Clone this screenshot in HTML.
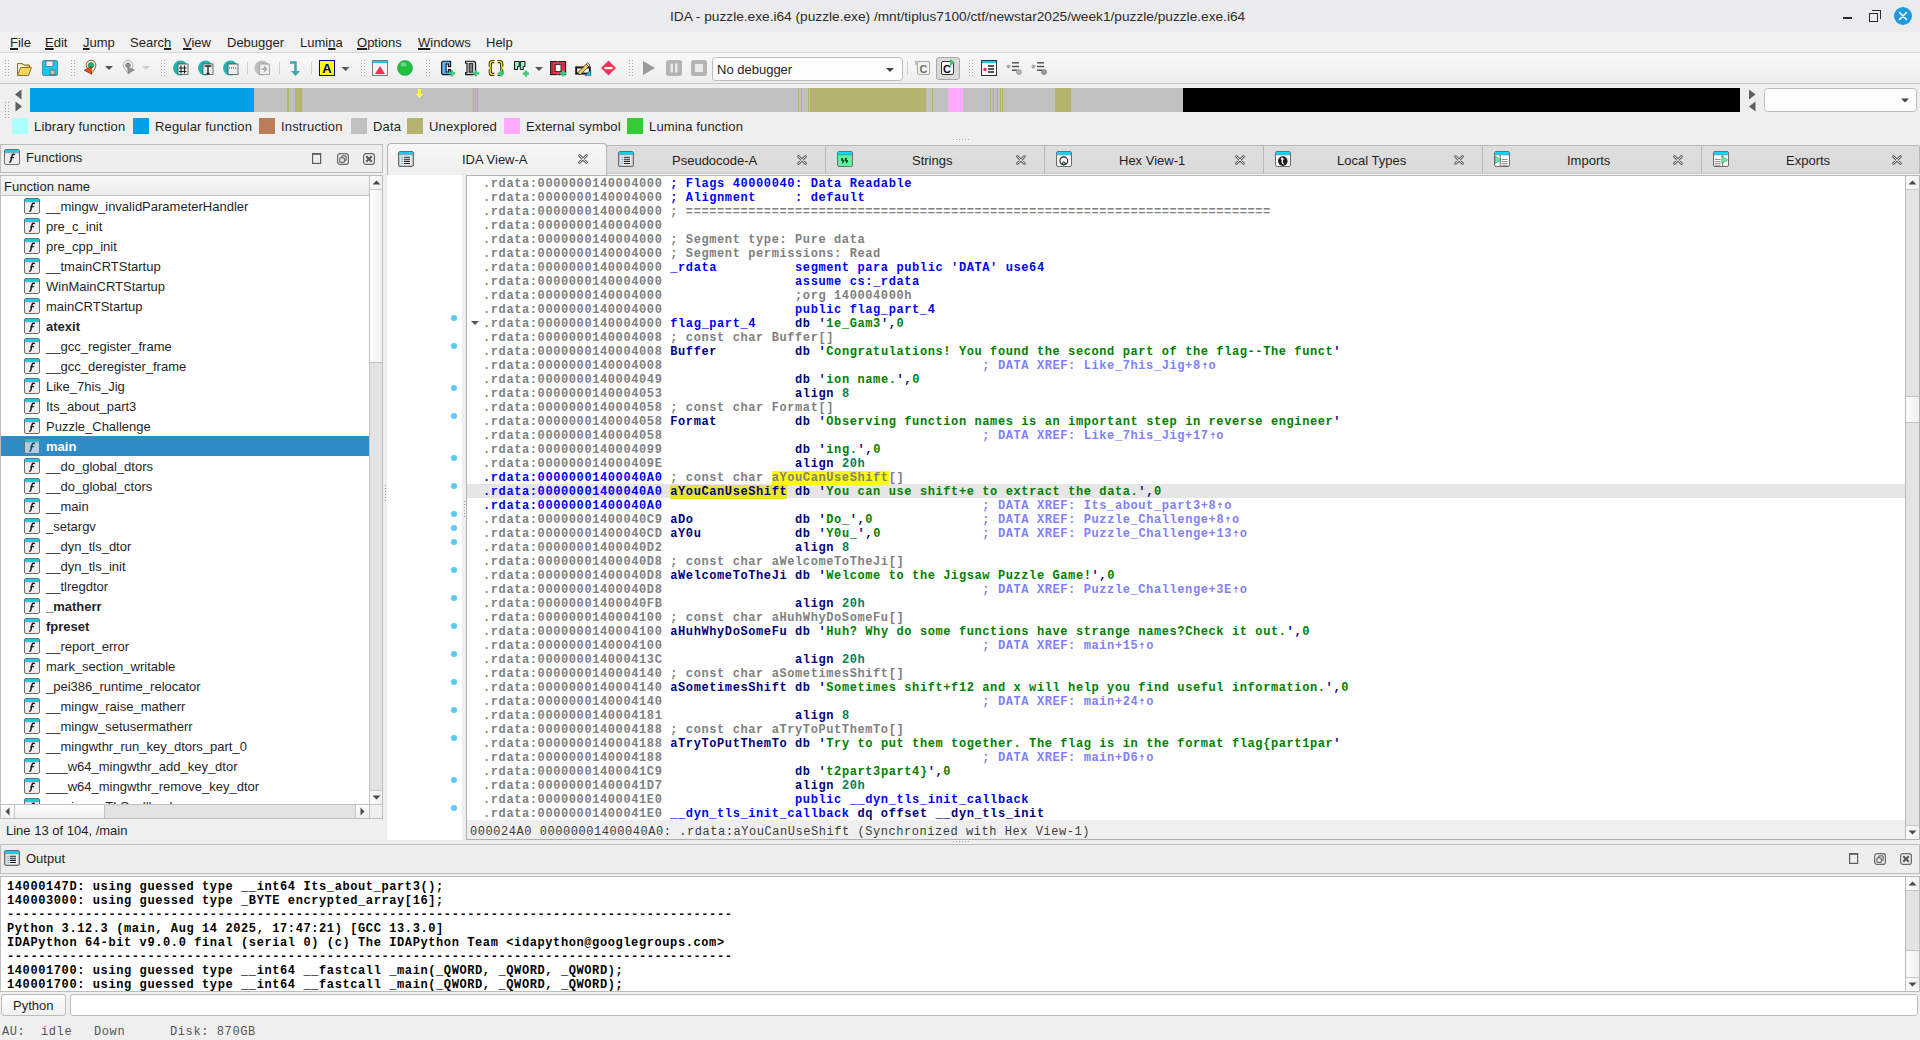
<!DOCTYPE html><html><head><meta charset="utf-8"><style>*{box-sizing:border-box;margin:0;padding:0}
html,body{width:1920px;height:1040px;overflow:hidden}
body{position:relative;background:#efefef;font-family:"Liberation Sans",sans-serif;font-size:13px;color:#1f1f1f}
.a{position:absolute}
.t{position:absolute;white-space:pre;line-height:14px}
.mono{font-family:"Liberation Mono",monospace;font-size:13px}
.ul{text-decoration:underline;text-underline-offset:1px;text-decoration-thickness:2px}
.hl{position:absolute;background:#dadada}
.ico{position:absolute;width:16px;height:16px}
.code{position:absolute;left:482px;white-space:pre;font-family:"Liberation Mono",monospace;font-size:12px;letter-spacing:0.6px;font-weight:bold;line-height:14px;height:14px}
.ad{color:#808080}
.adc{color:#0000ff}
.cm{color:#808080}
.bl{color:#0000ff}
.nv{color:#000080}
.st{color:#008000}
.nu{color:#00805a}
.xr{color:#8080ff}
.yh{background:#ffff00}
.yh2{background:#e6e62e}
.fn{position:absolute;left:46px;white-space:pre;line-height:20px;height:20px;margin-top:1px}
.fi{position:absolute;left:24px;width:16px;height:16px}
.sbarrow{position:absolute;width:0;height:0}
</style></head><body>
<!-- title bar -->
<div class="a" style="left:0;top:0;width:1920px;height:32px;background:#ebebed"></div>
<div class="t" style="left:670px;top:9px;line-height:16px;font-size:13.7px;color:#2b2b2b">IDA - puzzle.exe.i64 (puzzle.exe) /mnt/tiplus7100/ctf/newstar2025/week1/puzzle/puzzle.exe.i64</div>
<div class="a" style="left:1843px;top:17px;width:9px;height:2px;background:#2b2b2b"></div>
<div class="a" style="left:1869px;top:13px;width:9px;height:9px;border:1.5px solid #2b2b2b"></div>
<div class="a" style="left:1872px;top:10px;width:9px;height:9px;border-top:1.5px solid #2b2b2b;border-right:1.5px solid #2b2b2b"></div>
<div class="a" style="left:1894px;top:7px;width:18px;height:18px;border-radius:50%;background:#1f9ae0"></div>
<svg class="a" style="left:1894px;top:7px" width="18" height="18"><path d="M5.5 5.5L12.5 12.5M12.5 5.5L5.5 12.5" stroke="#fff" stroke-width="1.6" stroke-linecap="round"/></svg>
<!-- menu bar -->
<div class="a" style="left:0;top:32px;width:1920px;height:20px;background:#f0f0f0"></div>
<div class="a" style="left:0;top:52px;width:1920px;height:1px;background:#d8d8d8"></div>
<div class="t" style="left:10px;top:33px;line-height:20px"><span class="ul">F</span>ile</div>
<div class="t" style="left:45px;top:33px;line-height:20px"><span class="ul">E</span>dit</div>
<div class="t" style="left:83px;top:33px;line-height:20px"><span class="ul">J</span>ump</div>
<div class="t" style="left:130px;top:33px;line-height:20px">Searc<span class="ul">h</span></div>
<div class="t" style="left:183px;top:33px;line-height:20px"><span class="ul">V</span>iew</div>
<div class="t" style="left:227px;top:33px;line-height:20px">Debu<span class="ul">g</span>ger</div>
<div class="t" style="left:300px;top:33px;line-height:20px">Lumi<span class="ul">n</span>a</div>
<div class="t" style="left:357px;top:33px;line-height:20px"><span class="ul">O</span>ptions</div>
<div class="t" style="left:418px;top:33px;line-height:20px"><span class="ul">W</span>indows</div>
<div class="t" style="left:486px;top:33px;line-height:20px">Help</div>

<div class="a" style="left:0;top:53px;width:1920px;height:30px;background:linear-gradient(#f8f8f8,#f2f2f2 60%,#ececec)"></div>
<div class="a" style="left:0;top:83px;width:1920px;height:1px;background:#c9c9c9"></div>
<svg class="a" style="left:0;top:53px" width="1060" height="30">
<defs>
<symbol id="grp" viewBox="0 0 5 16"><g fill="#a6a6a6"><rect x="0" y="0" width="1" height="1"/><rect x="3" y="0" width="1" height="1"/><rect x="0" y="3" width="1" height="1"/><rect x="3" y="3" width="1" height="1"/><rect x="0" y="6" width="1" height="1"/><rect x="3" y="6" width="1" height="1"/><rect x="0" y="9" width="1" height="1"/><rect x="3" y="9" width="1" height="1"/><rect x="0" y="12" width="1" height="1"/><rect x="3" y="12" width="1" height="1"/><rect x="0" y="15" width="1" height="1"/><rect x="3" y="15" width="1" height="1"/></g></symbol>
</defs>
<!-- grips -->
<use href="#grp" x="5" y="7" width="5" height="16"/>
<use href="#grp" x="71" y="7" width="5" height="16"/>
<use href="#grp" x="161" y="7" width="5" height="16"/>
<use href="#grp" x="361" y="7" width="5" height="16"/>
<use href="#grp" x="426" y="7" width="5" height="16"/>
<use href="#grp" x="629" y="7" width="5" height="16"/>
<use href="#grp" x="969" y="7" width="5" height="16"/>
<!-- folder -->
<path d="M17.5 10.5h5l1.5 1.5h5.5v2.5" fill="#e9b83a" stroke="#8d7330" stroke-width="1"/>
<path d="M17.5 10.5v12h11l3-8h-11l-3 8" fill="#f6d35c" stroke="#8d7330" stroke-width="1"/>
<!-- save -->
<rect x="42.5" y="7.5" width="15" height="15" rx="1.5" fill="#14c8f0" stroke="#4a8fa5"/>
<rect x="46" y="8" width="7" height="5.5" fill="#eeeeee" stroke="#6a6a6a" stroke-width="0.8"/>
<rect x="50" y="17" width="5" height="4.5" fill="#bfbfbf" stroke="#6a6a6a" stroke-width="0.8"/>
<!-- target hand -->
<path d="M91 7.2c2.8 0 4.9 2.2 4.9 5 0 2.6-1.6 4.8-4.4 8.3-2.6-3.5-5.3-5.7-5.3-8.3 0-2.8 2-5 4.8-5z" fill="#f8e8b8" stroke="#5a4a30" stroke-width="0.8"/>
<circle cx="91" cy="12.3" r="2.7" fill="#1eb585" stroke="#0d5a40" stroke-width="0.5"/>
<path d="M84.2 17.3l7-3.8 0.4 7.8z" fill="#ff4e12" stroke="#4a2010" stroke-width="0.6" stroke-linejoin="round"/>
<path d="M105 13h8l-4 4z" fill="#555"/>
<!-- gray hand -->
<path d="M128 7.2c2.8 0 4.9 2.2 4.9 5 0 2.6-1.6 4.8-4.4 8.3-2.6-3.5-5.3-5.7-5.3-8.3 0-2.8 2-5 4.8-5z" fill="#f4f4f4" stroke="#9a9a9a" stroke-width="0.8"/>
<circle cx="128" cy="12.3" r="2.7" fill="#8c8c8c"/>
<path d="M127.2 13.5l8 3.3-7.5 4.6z" fill="#8f8f8f"/>
<path d="M142 13h8l-4 4z" fill="#cdcdcd"/>
<!-- # T 0101 circles -->
<g>
<circle cx="180.5" cy="15" r="7.5" fill="#23b3ad"/><rect x="178" y="11" width="10" height="10.5" fill="#eee" stroke="#3c5a5a" stroke-width="0.8"/>
<path d="M181 12.5v8M184.5 12.5v8M179 15h7.5M179 18.5h7.5" stroke="#222" stroke-width="1.1"/>
<circle cx="205.5" cy="15" r="7.5" fill="#23b3ad"/><rect x="203" y="11" width="10" height="10.5" fill="#eee" stroke="#3c5a5a" stroke-width="0.8"/>
<path d="M204.5 13h7M208 13v7.5M206.5 20.5h3" stroke="#222" stroke-width="1.3"/>
<circle cx="230.5" cy="15" r="7.5" fill="#23b3ad"/><rect x="228" y="11" width="10" height="10.5" fill="#eee" stroke="#3c5a5a" stroke-width="0.8"/>
<path d="M229 15h8" stroke="#999" stroke-width="2" stroke-dasharray="1 1"/>
</g>
<rect x="247" y="9" width="1" height="12" fill="#d0d0d0"/>
<circle cx="262" cy="15" r="7.5" fill="#bdbdbd"/><rect x="259.5" y="11" width="10" height="10.5" fill="#ececec" stroke="#9a9a9a" stroke-width="0.8"/>
<path d="M261.5 16h4M264 13.5l2.5 2.5-2.5 2.5" stroke="#a5a5a5" stroke-width="1.3" fill="none"/>
<rect x="279" y="9" width="1" height="12" fill="#d0d0d0"/>
<!-- turn arrow -->
<path d="M290 9.5h5.5v10" fill="none" stroke="#3aa7a8" stroke-width="2.5"/>
<path d="M291 18l4.5 5 4.5-5z" fill="#3aa7a8"/>
<rect x="311" y="9" width="1" height="12" fill="#d0d0d0"/>
<!-- A box -->
<rect x="319.5" y="7.5" width="15" height="15" fill="#ffff00" stroke="#000080" stroke-width="1"/>
<text x="327" y="20" font-family="Liberation Sans" font-weight="bold" font-size="13" fill="#000080" text-anchor="middle">A</text>
<path d="M341.5 14h8l-4 4z" fill="#555"/>
<!-- red triangle window -->
<rect x="372.5" y="7.5" width="15" height="15" fill="#f4f4f4" stroke="#707070" stroke-width="0.9"/>
<rect x="373" y="8" width="14" height="2" fill="#19c8ee"/>
<path d="M375 21l5-8 5 8z" fill="#f03050"/>
<!-- green circle -->
<circle cx="405" cy="15" r="7.5" fill="#1ec040"/>
<circle cx="405" cy="15" r="7.5" fill="none" stroke="#13a030" stroke-width="0.6"/>
<ellipse cx="403.5" cy="11.5" rx="3" ry="2" fill="#8ae89a" opacity="0.7"/>
<!-- C+ -->
<path d="M443.5 8.2H450.6V13.6H448.4V11H446.1V19H448.4V16.6H450.6V21.6H443.5Q441.6 21.6 441.6 19.6V10.2Q441.6 8.2 443.5 8.2Z" fill="#5cb0fa" stroke="#111" stroke-width="1.1" stroke-linejoin="round"/>
<g fill="#3ec87a"><rect x="450.8" y="17.2" width="2.4" height="6.2"/><rect x="448.9" y="19.1" width="6.2" height="2.4"/></g>
<!-- D+ -->
<path d="M465.6 8.2H473.2Q475.6 8.2 475.6 10.6V19.2Q475.6 21.6 473.2 21.6H465.6V19.6H467V10.2H465.6Z" fill="#cfcfcf" stroke="#111" stroke-width="1.1" stroke-linejoin="round"/>
<rect x="469.2" y="10.6" width="3.4" height="8.6" fill="#808080" stroke="#222" stroke-width="0.9"/>
<g fill="#3ec87a"><rect x="474.8" y="17.2" width="2.4" height="6.2"/><rect x="472.9" y="19.1" width="6.2" height="2.4"/></g>
<!-- {} -->
<rect x="492.5" y="8.5" width="7" height="13" fill="#f2f2f2"/>
<path d="M494.2 8.6H492.4Q490.3 8.6 490.3 10.8V13.1Q490.3 15 489 15Q490.3 15 490.3 16.9V19.4Q490.3 21.4 492.4 21.4H494.2M497.8 8.6H499.6Q501.7 8.6 501.7 10.8V13.1Q501.7 15 503 15Q501.7 15 501.7 16.9V19.4Q501.7 21.4 499.6 21.4H497.8" fill="none" stroke="#111" stroke-width="3.2"/>
<path d="M494.2 8.6H492.4Q490.3 8.6 490.3 10.8V13.1Q490.3 15 489 15Q490.3 15 490.3 16.9V19.4Q490.3 21.4 492.4 21.4H494.2M497.8 8.6H499.6Q501.7 8.6 501.7 10.8V13.1Q501.7 15 503 15Q501.7 15 501.7 16.9V19.4Q501.7 21.4 499.6 21.4H497.8" fill="none" stroke="#f6e21c" stroke-width="1.5"/>
<g fill="#3ec87a"><rect x="499.8" y="17.2" width="2.4" height="6.2"/><rect x="497.9" y="19.1" width="6.2" height="2.4"/></g>
<!-- quotes -->
<path d="M514.5 8.5H519.3V13.5H517.6V16.5H514.5Z" fill="#90f0c4" stroke="#111" stroke-width="1"/>
<path d="M520.3 8.5H525V13.5H523.3V16.5H520.3Z" fill="#90f0c4" stroke="#111" stroke-width="1"/>
<g fill="#3ec87a"><rect x="524.8" y="17.6" width="2.4" height="6"/><rect x="522.9" y="19.4" width="6" height="2.4"/></g>
<path d="M535 14h8l-4 4z" fill="#555"/>
<!-- red box -->
<rect x="550.6" y="8.6" width="15" height="13" fill="#ff2a4a" stroke="#1e1e1e" stroke-width="1.1"/>
<rect x="555.2" y="11.6" width="5.8" height="7" fill="#fafafa" stroke="#1e1e1e" stroke-width="0.9"/>
<rect x="557.3" y="8.2" width="1.6" height="3.2" fill="#9a5a64"/><rect x="557.3" y="18.8" width="1.6" height="3.2" fill="#9a5a64"/>
<path d="M552.4 9.6v11M563.8 9.6v11" stroke="#9a2838" stroke-width="0.8"/>
<g fill="#3ec87a"><rect x="562" y="17.4" width="2.4" height="6"/><rect x="560.2" y="19.2" width="6" height="2.4"/></g>
<!-- pencil -->
<rect x="576.2" y="14.4" width="13.6" height="6.2" fill="#fff" stroke="#161616" stroke-width="2"/>
<path d="M577.8 19.6l8.4-8.4 2.4 2.4-8.4 8.4z" fill="#f4c85a" stroke="#2a2a2a" stroke-width="0.8"/>
<path d="M586.2 11.2l1.4-1.4 2.4 2.4-1.4 1.4z" fill="#f0d0b8" stroke="#2a2a2a" stroke-width="0.8"/>
<path d="M585 22.6l5.8-5.6v5.6z" fill="#1ec8f0" stroke="#222" stroke-width="0.5"/>
<!-- red diamond -->
<path d="M608.5 7.5l7.5 7.5-7.5 7.5-7.5-7.5z" fill="#f03552"/>
<rect x="604.5" y="14" width="8" height="2.2" fill="#fff"/>
<!-- play pause stop -->
<path d="M643 8l12 7-12 7z" fill="#9a9a9a"/>
<rect x="666" y="7" width="16" height="16" rx="2.5" fill="#b4b4b4"/>
<rect x="670.5" y="10.5" width="2.5" height="9" fill="#e8e8e8"/><rect x="675" y="10.5" width="2.5" height="9" fill="#e8e8e8"/>
<rect x="691" y="7" width="16" height="16" rx="2.5" fill="#b4b4b4"/>
<rect x="695" y="11" width="8" height="8" fill="#ececec"/>
<!-- combo -->
<rect x="712.5" y="4.5" width="190" height="23" rx="3" fill="#fdfdfd" stroke="#bcbcbc"/>
<text x="717" y="20.5" font-family="Liberation Sans" font-size="13" fill="#1f1f1f">No debugger</text>
<path d="M886 15h8l-4 4z" fill="#444"/>
<rect x="907" y="8" width="1" height="14" fill="#d0d0d0"/>
<!-- gray C -->
<rect x="917.5" y="8.5" width="12" height="13" rx="1.5" fill="#f2f2f2" stroke="#a8a8a8"/>
<text x="923.5" y="19.5" font-family="Liberation Sans" font-weight="bold" font-size="11" fill="#707070" text-anchor="middle">C</text>
<path d="M915 7v6l4-4z" fill="#c0c0c0"/>
<!-- active C button -->
<rect x="936.5" y="4.5" width="23" height="22" rx="2.5" fill="#dadada" stroke="#a9a9a9"/>
<rect x="941.5" y="8.5" width="12" height="13" rx="1.5" fill="#f8f8f8" stroke="#333"/>
<text x="947" y="19.5" font-family="Liberation Sans" font-weight="bold" font-size="11" fill="#111" text-anchor="middle">C</text>
<path d="M950 6v7l5-3.5z" fill="#40c060"/>
<!-- list icons -->
<rect x="981.5" y="7.5" width="15" height="15" fill="#fafafa" stroke="#333"/>
<rect x="982" y="8" width="14" height="2.2" fill="#19c8ee"/>
<circle cx="985" cy="16.5" r="1.8" fill="#f03050"/>
<path d="M988 13h6M988 16h6M988 19h6" stroke="#222" stroke-width="1.3"/>
<circle cx="1008.5" cy="13.5" r="2" fill="#aaa"/><path d="M1012 9.8h7M1012 13.5h7M1012 17.2h5" stroke="#555" stroke-width="1.4"/><circle cx="1019" cy="19" r="2.6" fill="#b0b0b0" stroke="#999" stroke-width="0.6"/>
<circle cx="1033.5" cy="13.5" r="2" fill="#aaa"/><path d="M1037 9.8h7M1037 13.5h7M1037 17.2h5" stroke="#555" stroke-width="1.4"/><circle cx="1044" cy="19" r="2.6" fill="#999" stroke="#777" stroke-width="0.6"/>
</svg>

<svg class="a" style="left:0;top:84px" width="1920" height="60">
<use href="#grp" x="5" y="18" width="5" height="16"/>
<path d="M15 10.5l6.5-5v10z" fill="#5e5e5e"/>
<path d="M15.5 17.5v10l6.5-5z" fill="#5e5e5e"/>
<rect x="30" y="4" width="1710" height="24" fill="#c0c0c0"/>
<rect x="30" y="4" width="224" height="24" fill="#00a0e6"/>
<g fill="#b4b46e">
<rect x="287" y="4" width="2" height="24"/>
<rect x="295" y="4" width="7" height="24"/>
<rect x="473" y="4" width="1" height="24"/><rect x="475" y="4" width="1" height="24"/><rect x="477" y="4" width="1" height="24"/>
<rect x="798" y="4" width="1" height="24"/><rect x="801" y="4" width="1" height="24"/><rect x="808" y="4" width="1" height="24"/>
<rect x="810" y="4" width="116" height="24"/>
<rect x="932" y="4" width="1" height="24"/>
<rect x="990" y="4" width="1" height="24"/><rect x="993" y="4" width="1" height="24"/><rect x="997" y="4" width="1" height="24"/><rect x="1000" y="4" width="1" height="24"/><rect x="1002" y="4" width="1" height="24"/>
<rect x="1055" y="4" width="16" height="24"/>
</g>
<rect x="948" y="4" width="15" height="24" fill="#ffaaff"/>
<rect x="1183" y="4" width="557" height="24" fill="#000"/>
<path d="M418 5h3v5h2l-3.5 4-3.5-4h2z" fill="#ffff40"/>
<path d="M1749 5.5v10l6.5-5z" fill="#5e5e5e"/>
<path d="M1749 22.5l6.5-5v10z" fill="#5e5e5e"/>
<rect x="1764.5" y="4.5" width="152" height="23" rx="3" fill="#fcfcfc" stroke="#bdbdbd"/>
<path d="M1901 14.5h8l-4 4z" fill="#444"/>
<!-- legend swatches -->
<rect x="12" y="34" width="16" height="16" fill="#aaffff"/>
<rect x="133" y="34" width="16" height="16" fill="#00a0e6"/>
<rect x="259" y="34" width="16" height="16" fill="#b97d5a"/>
<rect x="351" y="34" width="16" height="16" fill="#c0c0c0"/>
<rect x="407" y="34" width="16" height="16" fill="#b4b46e"/>
<rect x="504" y="34" width="16" height="16" fill="#ffaaff"/>
<rect x="627" y="34" width="16" height="16" fill="#33cc33"/>
<g fill="#a8a8a8"><rect x="953" y="55" width="1" height="1"/><rect x="956" y="55" width="1" height="1"/><rect x="959" y="55" width="1" height="1"/><rect x="962" y="55" width="1" height="1"/><rect x="965" y="55" width="1" height="1"/><rect x="968" y="55" width="1" height="1"/></g>
</svg>
<div class="t" style="left:34px;top:118px;line-height:18px;letter-spacing:0.15px">Library function</div>
<div class="t" style="left:155px;top:118px;line-height:18px;letter-spacing:0.15px">Regular function</div>
<div class="t" style="left:281px;top:118px;line-height:18px;letter-spacing:0.15px">Instruction</div>
<div class="t" style="left:373px;top:118px;line-height:18px;letter-spacing:0.15px">Data</div>
<div class="t" style="left:429px;top:118px;line-height:18px;letter-spacing:0.15px">Unexplored</div>
<div class="t" style="left:526px;top:118px;line-height:18px;letter-spacing:0.15px">External symbol</div>
<div class="t" style="left:649px;top:118px;line-height:18px;letter-spacing:0.15px">Lumina function</div>

<svg width="0" height="0" style="position:absolute"><defs>
<symbol id="fic" viewBox="0 0 16 16"><rect x="0.5" y="0.5" width="15" height="15" rx="1.5" fill="#eeeeee" stroke="#707070"/><rect x="1" y="1" width="14" height="2.6" fill="#00d4f5"/><rect x="1" y="3.6" width="14" height="0.6" fill="#777"/><path d="M10.8 5.8q-0.6-0.7-1.6-0.5q-1 0.3-1.3 1.8l-1.1 5q-0.3 1.2-1.6 1.1" fill="none" stroke="#1a1a1a" stroke-width="1.5"/><path d="M6.3 8.6h3.8" stroke="#1a1a1a" stroke-width="1.1"/></symbol>
<symbol id="lic" viewBox="0 0 16 16"><rect x="0.5" y="0.5" width="15" height="15" rx="1.5" fill="#c4c4c4" stroke="#6a6a6a"/><rect x="1" y="1" width="14" height="2.4" fill="#00d4f5"/><rect x="1" y="3.4" width="14" height="0.6" fill="#8a8a8a"/><rect x="2.5" y="4.5" width="11" height="9.5" fill="#f6f6f6"/><g fill="#1b8fd8"><rect x="3.5" y="5.6" width="1.2" height="1.2"/><rect x="3.5" y="7.7" width="1.2" height="1.2"/><rect x="3.5" y="9.8" width="1.2" height="1.2"/><rect x="3.5" y="11.9" width="1.2" height="1.2"/></g><path d="M5.8 6.2h6.2M5.8 8.3h6.2M5.8 10.4h6.2M5.8 12.5h6.2" stroke="#1e1e1e" stroke-width="1.1"/></symbol>
<symbol id="bfl" viewBox="0 0 12 12"><rect x="1.6" y="1.6" width="8" height="9.8" fill="none" stroke="#5e5e5e" stroke-width="1.2"/><rect x="1" y="1" width="9.2" height="1.8" fill="#5e5e5e"/></symbol>
<symbol id="brs" viewBox="0 0 12 12"><rect x="0.6" y="0.6" width="10.8" height="10.8" rx="2.5" fill="none" stroke="#6a6a6a" stroke-width="1.2"/><rect x="4.6" y="2.8" width="4.6" height="4.6" rx="0.9" fill="none" stroke="#6a6a6a" stroke-width="1.2"/><rect x="2.8" y="4.8" width="4.6" height="4.6" rx="0.9" fill="#eee" stroke="#6a6a6a" stroke-width="1.2"/></symbol>
<symbol id="bcl" viewBox="0 0 12 12"><rect x="0.6" y="0.6" width="10.8" height="10.8" rx="2.5" fill="none" stroke="#6a6a6a" stroke-width="1.2"/><path d="M3.2 3.2l5.6 5.6M8.8 3.2l-5.6 5.6" stroke="#5a5a5a" stroke-width="2.2"/></symbol>
<symbol id="tcl" viewBox="0 0 12 12"><path d="M1.8 1.8l8.4 8.4M10.2 1.8l-8.4 8.4" stroke="#6e6e6e" stroke-width="3.4" stroke-linecap="round"/><path d="M1.8 1.8l8.4 8.4M10.2 1.8l-8.4 8.4" stroke="#d8d8d8" stroke-width="1.2" stroke-linecap="round"/></symbol>
</defs></svg>
<div class="a" style="left:0;top:144px;width:383px;height:29px;background:#eeeeee;border:1px solid #bdbdbd"></div>
<svg class="ico" style="left:4px;top:149px"><use href="#fic"/></svg>
<div class="t" style="left:26px;top:149px;line-height:18px">Functions</div>
<svg class="a" style="left:311px;top:152px" width="12" height="12"><use href="#bfl"/></svg>
<svg class="a" style="left:337px;top:153px" width="12" height="12"><use href="#brs"/></svg>
<svg class="a" style="left:363px;top:153px" width="12" height="12"><use href="#bcl"/></svg>
<div class="a" style="left:0;top:175px;width:383px;height:644px;background:#fff;border:1px solid #bdbdbd;overflow:hidden">
<div class="a" style="left:0;top:0;width:368px;height:20px;background:linear-gradient(#f7f7f7,#ececec);border-bottom:1px solid #c4c4c4"></div>
<div class="t" style="left:3px;top:2px;line-height:18px">Function name</div>
<svg class="fi" style="top:22px;left:23px"><use href="#fic"/></svg>
<div class="fn" style="top:20px;left:45px;">__mingw_invalidParameterHandler</div>
<svg class="fi" style="top:42px;left:23px"><use href="#fic"/></svg>
<div class="fn" style="top:40px;left:45px;">pre_c_init</div>
<svg class="fi" style="top:62px;left:23px"><use href="#fic"/></svg>
<div class="fn" style="top:60px;left:45px;">pre_cpp_init</div>
<svg class="fi" style="top:82px;left:23px"><use href="#fic"/></svg>
<div class="fn" style="top:80px;left:45px;">__tmainCRTStartup</div>
<svg class="fi" style="top:102px;left:23px"><use href="#fic"/></svg>
<div class="fn" style="top:100px;left:45px;">WinMainCRTStartup</div>
<svg class="fi" style="top:122px;left:23px"><use href="#fic"/></svg>
<div class="fn" style="top:120px;left:45px;">mainCRTStartup</div>
<svg class="fi" style="top:142px;left:23px"><use href="#fic"/></svg>
<div class="fn" style="top:140px;left:45px;font-weight:bold;">atexit</div>
<svg class="fi" style="top:162px;left:23px"><use href="#fic"/></svg>
<div class="fn" style="top:160px;left:45px;">__gcc_register_frame</div>
<svg class="fi" style="top:182px;left:23px"><use href="#fic"/></svg>
<div class="fn" style="top:180px;left:45px;">__gcc_deregister_frame</div>
<svg class="fi" style="top:202px;left:23px"><use href="#fic"/></svg>
<div class="fn" style="top:200px;left:45px;">Like_7his_Jig</div>
<svg class="fi" style="top:222px;left:23px"><use href="#fic"/></svg>
<div class="fn" style="top:220px;left:45px;">Its_about_part3</div>
<svg class="fi" style="top:242px;left:23px"><use href="#fic"/></svg>
<div class="fn" style="top:240px;left:45px;">Puzzle_Challenge</div>
<div class="a" style="left:0;top:260px;width:368px;height:20px;background:#308cc6"></div>
<svg class="fi" style="top:262px;left:23px"><use href="#fic"/></svg>
<div class="a" style="left:24px;top:262px;width:16px;height:16px;background:rgba(48,140,198,0.35)"></div>
<div class="fn" style="top:260px;left:45px;font-weight:bold;color:#fff">main</div>
<svg class="fi" style="top:282px;left:23px"><use href="#fic"/></svg>
<div class="fn" style="top:280px;left:45px;">__do_global_dtors</div>
<svg class="fi" style="top:302px;left:23px"><use href="#fic"/></svg>
<div class="fn" style="top:300px;left:45px;">__do_global_ctors</div>
<svg class="fi" style="top:322px;left:23px"><use href="#fic"/></svg>
<div class="fn" style="top:320px;left:45px;">__main</div>
<svg class="fi" style="top:342px;left:23px"><use href="#fic"/></svg>
<div class="fn" style="top:340px;left:45px;">_setargv</div>
<svg class="fi" style="top:362px;left:23px"><use href="#fic"/></svg>
<div class="fn" style="top:360px;left:45px;">__dyn_tls_dtor</div>
<svg class="fi" style="top:382px;left:23px"><use href="#fic"/></svg>
<div class="fn" style="top:380px;left:45px;">__dyn_tls_init</div>
<svg class="fi" style="top:402px;left:23px"><use href="#fic"/></svg>
<div class="fn" style="top:400px;left:45px;">__tlregdtor</div>
<svg class="fi" style="top:422px;left:23px"><use href="#fic"/></svg>
<div class="fn" style="top:420px;left:45px;font-weight:bold;">_matherr</div>
<svg class="fi" style="top:442px;left:23px"><use href="#fic"/></svg>
<div class="fn" style="top:440px;left:45px;font-weight:bold;">fpreset</div>
<svg class="fi" style="top:462px;left:23px"><use href="#fic"/></svg>
<div class="fn" style="top:460px;left:45px;">__report_error</div>
<svg class="fi" style="top:482px;left:23px"><use href="#fic"/></svg>
<div class="fn" style="top:480px;left:45px;">mark_section_writable</div>
<svg class="fi" style="top:502px;left:23px"><use href="#fic"/></svg>
<div class="fn" style="top:500px;left:45px;">_pei386_runtime_relocator</div>
<svg class="fi" style="top:522px;left:23px"><use href="#fic"/></svg>
<div class="fn" style="top:520px;left:45px;">__mingw_raise_matherr</div>
<svg class="fi" style="top:542px;left:23px"><use href="#fic"/></svg>
<div class="fn" style="top:540px;left:45px;">__mingw_setusermatherr</div>
<svg class="fi" style="top:562px;left:23px"><use href="#fic"/></svg>
<div class="fn" style="top:560px;left:45px;">__mingwthr_run_key_dtors_part_0</div>
<svg class="fi" style="top:582px;left:23px"><use href="#fic"/></svg>
<div class="fn" style="top:580px;left:45px;">___w64_mingwthr_add_key_dtor</div>
<svg class="fi" style="top:602px;left:23px"><use href="#fic"/></svg>
<div class="fn" style="top:600px;left:45px;">___w64_mingwthr_remove_key_dtor</div>
<svg class="fi" style="top:622px;left:23px"><use href="#fic"/></svg>
<div class="fn" style="top:620px;left:45px;">__mingw_TLScallback</div>
<div class="a" style="left:368px;top:0;width:14px;height:628px;background:#e3e3e3;border-left:1px solid #c2c2c2"></div>
<div class="a" style="left:369px;top:0;width:13px;height:14px;background:linear-gradient(90deg,#fbfbfb,#f0f0f0);border-bottom:1px solid #c8c8c8"></div>
<svg class="a" style="left:369px;top:0" width="13" height="14"><path d="M2.5 8.5h8l-4-4z" fill="#4a4a4a"/></svg>
<div class="a" style="left:369px;top:14px;width:13px;height:173px;background:linear-gradient(90deg,#fdfdfd,#efefef);border-bottom:1px solid #c2c2c2"></div>
<div class="a" style="left:369px;top:614px;width:13px;height:14px;background:linear-gradient(90deg,#fbfbfb,#f0f0f0);border-top:1px solid #c8c8c8"></div>
<svg class="a" style="left:369px;top:614px" width="13" height="14"><path d="M2.5 5.5h8l-4 4z" fill="#4a4a4a"/></svg>
<div class="a" style="left:0;top:628px;width:382px;height:15px;background:#e3e3e3;border-top:1px solid #c2c2c2"></div>
<div class="a" style="left:0;top:629px;width:14px;height:14px;background:linear-gradient(#fbfbfb,#f0f0f0);border-right:1px solid #c8c8c8"></div>
<svg class="a" style="left:0;top:629px" width="14" height="14"><path d="M8.5 2.5v8l-4-4z" fill="#4a4a4a"/></svg>
<div class="a" style="left:14px;top:629px;width:90px;height:14px;background:linear-gradient(#fdfdfd,#efefef);border-right:1px solid #c2c2c2"></div>
<div class="a" style="left:354px;top:629px;width:14px;height:14px;background:linear-gradient(#fbfbfb,#f0f0f0);border-left:1px solid #c8c8c8"></div>
<svg class="a" style="left:354px;top:629px" width="14" height="14"><path d="M5.5 2.5v8l4-4z" fill="#4a4a4a"/></svg>
<div class="a" style="left:368px;top:628px;width:14px;height:15px;background:#efefef;border-left:1px solid #c2c2c2;border-top:1px solid #c2c2c2"></div>
</div>
<div class="t" style="left:6px;top:822px;line-height:18px">Line 13 of 104, /main</div>
<svg width="0" height="0" style="position:absolute"><defs>
<symbol id="sic" viewBox="0 0 16 16"><rect x="0.5" y="0.5" width="15" height="15" rx="1.5" fill="#5ff0a0" stroke="#6e6e6e"/><rect x="1" y="1" width="14" height="2.6" fill="#0ad8ff"/><rect x="1" y="3.5" width="14" height="0.7" fill="#3a7f90"/><path d="M6.2 7.2a1.4 1.4 0 1 0 0.6 2.6q-0.1 1.2-1.3 2.2M9.8 7.2a1.4 1.4 0 1 0 0.6 2.6q-0.1 1.2-1.3 2.2" fill="#003d14" stroke="#003d14" stroke-width="1.1"/></symbol>
<symbol id="hic" viewBox="0 0 16 16"><rect x="0.5" y="0.5" width="15" height="15" rx="1.5" fill="#fafafa" stroke="#6e6e6e"/><rect x="1" y="1" width="14" height="2.6" fill="#0ad8ff"/><rect x="1" y="3.5" width="14" height="0.7" fill="#3a7f90"/><circle cx="7.8" cy="9.8" r="3.9" fill="none" stroke="#1a1a1a" stroke-width="1.1"/><path d="M7.8 10.6q-2 1.2-2 2.6q2 1.2 4 0q0-1.4-2-2.6z" fill="#40f0a0" stroke="#111" stroke-width="0.9"/></symbol>
<symbol id="tic" viewBox="0 0 16 16"><rect x="0.5" y="0.5" width="15" height="15" rx="1.5" fill="#fafafa" stroke="#6e6e6e"/><rect x="1" y="1" width="14" height="2.6" fill="#0ad8ff"/><rect x="1" y="3.5" width="14" height="0.7" fill="#3a7f90"/><circle cx="7.8" cy="10.1" r="4.8" fill="#1c1c1c"/><path d="M7.4 6.4q-0.4 1-1.4 1.4h1.3v3.6q0 1.6 1.6 1.4" fill="none" stroke="#fff" stroke-width="1.3"/><path d="M6.5 8h2.6" stroke="#fff" stroke-width="1"/></symbol>
<symbol id="iic" viewBox="0 0 16 16"><rect x="0.5" y="0.5" width="15" height="15" rx="1.5" fill="#fafafa" stroke="#6e6e6e"/><rect x="1" y="1" width="14" height="2.6" fill="#0ad8ff"/><rect x="1" y="3.5" width="14" height="0.7" fill="#3a7f90"/><rect x="5.7" y="4" width="1" height="11.5" fill="#6e6e6e"/><path d="M1.2 5v7.5l5.8-3.6z" fill="#5ff0a0" stroke="#2f6f4f" stroke-width="0.5"/><path d="M7.6 8.5h6M7.6 10.5h6M7.6 12.5h6M7.6 14.3h6" stroke="#888" stroke-width="0.9"/></symbol>
<symbol id="eic" viewBox="0 0 16 16"><rect x="0.5" y="0.5" width="15" height="15" rx="1.5" fill="#fafafa" stroke="#6e6e6e"/><rect x="1" y="1" width="14" height="2.6" fill="#0ad8ff"/><rect x="1" y="3.5" width="14" height="0.7" fill="#3a7f90"/><rect x="9.2" y="4" width="1" height="11.5" fill="#6e6e6e"/><path d="M8.8 5v7.5l5.8-3.6z" fill="#5ff0a0" stroke="#2f6f4f" stroke-width="0.5"/><path d="M1.8 8.5h5.8M1.8 10.5h5.8M1.8 12.5h5.8M1.8 14.3h5.8" stroke="#888" stroke-width="0.9"/></symbol>
</defs></svg>
<!-- inactive tabs -->
<div class="a" style="left:606px;top:145px;width:1314px;height:29px;background:linear-gradient(#dedede,#dadada);border-top:1px solid #b9b9b9;border-radius:3px 3px 0 0"></div>
<div class="a" style="left:606px;top:174px;width:1314px;height:1px;background:#f6f6f6"></div>
<div class="a" style="left:606px;top:145px;width:1px;height:29px;background:#b9b9b9"></div>
<div class="a" style="left:825px;top:146px;width:1px;height:27px;background:#b9b9b9"></div>
<div class="a" style="left:1044px;top:146px;width:1px;height:27px;background:#b9b9b9"></div>
<div class="a" style="left:1263px;top:146px;width:1px;height:27px;background:#b9b9b9"></div>
<div class="a" style="left:1482px;top:146px;width:1px;height:27px;background:#b9b9b9"></div>
<div class="a" style="left:1701px;top:146px;width:1px;height:27px;background:#b9b9b9"></div>
<div class="a" style="left:1919px;top:146px;width:1px;height:27px;background:#b9b9b9"></div>
<div class="a" style="left:606px;top:173px;width:1314px;height:1px;background:#c6c6c6"></div>
<div class="a" style="left:466px;top:175px;width:1454px;height:1px;background:#b4b4b4"></div>
<!-- active tab -->
<div class="a" style="left:387px;top:143px;width:220px;height:32px;background:linear-gradient(#f7f7f7,#efefef);border:1px solid #b4b4b4;border-bottom:none;border-radius:4px 4px 0 0"></div>
<svg class="ico" style="left:398px;top:151px"><use href="#lic"/></svg>
<div class="t" style="left:462px;top:151px;line-height:18px">IDA View-A</div>
<svg class="a" style="left:578px;top:154px" width="10" height="10" viewBox="0 0 12 12"><use href="#tcl"/></svg>
<!-- tab contents -->
<svg class="ico" style="left:618px;top:151px"><use href="#lic"/></svg>
<div class="t" style="left:672px;top:152px;line-height:18px">Pseudocode-A</div>
<svg class="a" style="left:797px;top:155px" width="10" height="10" viewBox="0 0 12 12"><use href="#tcl"/></svg>
<svg class="ico" style="left:837px;top:151px"><use href="#sic"/></svg>
<div class="t" style="left:912px;top:152px;line-height:18px">Strings</div>
<svg class="a" style="left:1016px;top:155px" width="10" height="10" viewBox="0 0 12 12"><use href="#tcl"/></svg>
<svg class="ico" style="left:1056px;top:151px"><use href="#hic"/></svg>
<div class="t" style="left:1119px;top:152px;line-height:18px">Hex View-1</div>
<svg class="a" style="left:1235px;top:155px" width="10" height="10" viewBox="0 0 12 12"><use href="#tcl"/></svg>
<svg class="ico" style="left:1275px;top:151px"><use href="#tic"/></svg>
<div class="t" style="left:1337px;top:152px;line-height:18px">Local Types</div>
<svg class="a" style="left:1454px;top:155px" width="10" height="10" viewBox="0 0 12 12"><use href="#tcl"/></svg>
<svg class="ico" style="left:1494px;top:151px"><use href="#iic"/></svg>
<div class="t" style="left:1567px;top:152px;line-height:18px">Imports</div>
<svg class="a" style="left:1673px;top:155px" width="10" height="10" viewBox="0 0 12 12"><use href="#tcl"/></svg>
<svg class="ico" style="left:1713px;top:151px"><use href="#eic"/></svg>
<div class="t" style="left:1786px;top:152px;line-height:18px">Exports</div>
<svg class="a" style="left:1892px;top:155px" width="10" height="10" viewBox="0 0 12 12"><use href="#tcl"/></svg>

<!-- view frame -->
<div class="a" style="left:387px;top:175px;width:75px;height:665px;background:#fff"></div>
<div class="a" style="left:462px;top:175px;width:4px;height:665px;background:#efefef"></div>
<div class="a" style="left:466px;top:175px;width:1px;height:665px;background:#b0b0b0"></div>
<div class="a" style="left:467px;top:176px;width:1438px;height:644px;background:#fff"></div>
<div class="a" style="left:467px;top:820px;width:1438px;height:19px;background:#efefef"></div>
<div class="a" style="left:466px;top:839px;width:1454px;height:1px;background:#b0b0b0"></div>
<div class="a" style="left:1919px;top:175px;width:1px;height:665px;background:#b0b0b0"></div>
<!-- scrollbar -->
<div class="a" style="left:1905px;top:176px;width:14px;height:663px;background:#e3e3e3;border-left:1px solid #b8b8b8"></div>
<div class="a" style="left:1906px;top:176px;width:13px;height:14px;background:linear-gradient(90deg,#fbfbfb,#f0f0f0);border-bottom:1px solid #c8c8c8"></div>
<svg class="a" style="left:1906px;top:176px" width="13" height="14"><path d="M2.5 8.5h8l-4-4z" fill="#4a4a4a"/></svg>
<div class="a" style="left:1906px;top:396px;width:13px;height:27px;background:linear-gradient(90deg,#fdfdfd,#efefef);border-top:1px solid #c2c2c2;border-bottom:1px solid #c2c2c2"></div>
<div class="a" style="left:1906px;top:825px;width:13px;height:14px;background:linear-gradient(90deg,#fbfbfb,#f0f0f0);border-top:1px solid #c8c8c8"></div>
<svg class="a" style="left:1906px;top:825px" width="13" height="14"><path d="M2.5 5.5h8l-4 4z" fill="#4a4a4a"/></svg>
<!-- gutter dots -->
<svg class="a" style="left:387px;top:176px" width="100" height="664">
<g fill="#5ac8fa">
<circle cx="67" cy="142" r="3"/><circle cx="67" cy="170" r="3"/><circle cx="67" cy="212" r="3"/><circle cx="67" cy="240" r="3"/>
<circle cx="67" cy="282" r="3"/><circle cx="67" cy="310" r="3"/><circle cx="67" cy="338" r="3"/><circle cx="67" cy="352" r="3"/><circle cx="67" cy="366" r="3"/>
<circle cx="67" cy="394" r="3"/><circle cx="67" cy="422" r="3"/><circle cx="67" cy="450" r="3"/><circle cx="67" cy="478" r="3"/>
<circle cx="67" cy="506" r="3"/><circle cx="67" cy="534" r="3"/><circle cx="67" cy="562" r="3"/><circle cx="67" cy="604" r="3"/><circle cx="67" cy="632" r="3"/>
</g>
<path d="M84 145h8l-4 4z" fill="#555"/>
</svg>
<!-- current line -->
<div class="a" style="left:467px;top:484px;width:1438px;height:14px;background:#e6e6e6"></div>
<svg class="a" style="left:383px;top:480px" width="84" height="40"><g fill="#9a9a9a"><rect x="2" y="5" width="1" height="1"/><rect x="2" y="8" width="1" height="1"/><rect x="2" y="11" width="1" height="1"/><rect x="2" y="14" width="1" height="1"/><rect x="2" y="17" width="1" height="1"/><rect x="2" y="20" width="1" height="1"/><rect x="81" y="21" width="1" height="1"/><rect x="81" y="24" width="1" height="1"/><rect x="81" y="27" width="1" height="1"/><rect x="81" y="30" width="1" height="1"/><rect x="81" y="33" width="1" height="1"/><rect x="81" y="36" width="1" height="1"/></g></svg>

<svg class="a" style="left:950px;top:838px" width="24" height="6"><g fill="#a8a8a8"><rect x="3" y="3" width="1" height="1"/><rect x="6" y="3" width="1" height="1"/><rect x="9" y="3" width="1" height="1"/><rect x="12" y="3" width="1" height="1"/><rect x="15" y="3" width="1" height="1"/><rect x="18" y="3" width="1" height="1"/></g></svg>
<div class="a" style="left:0;top:844px;width:1920px;height:30px;background:#eeeeee;border:1px solid #bdbdbd"></div>
<svg class="ico" style="left:4px;top:850px"><use href="#lic"/></svg>
<div class="t" style="left:26px;top:850px;line-height:18px">Output</div>
<svg class="a" style="left:1848px;top:852px" width="12" height="12"><use href="#bfl"/></svg>
<svg class="a" style="left:1874px;top:853px" width="12" height="12"><use href="#brs"/></svg>
<svg class="a" style="left:1900px;top:853px" width="12" height="12"><use href="#bcl"/></svg>
<div class="a" style="left:0;top:876px;width:1920px;height:116px;background:#fff;border:1px solid #bdbdbd"></div>
<div class="t mono" style="left:7px;top:880px;font-weight:bold;color:#000;line-height:14px;font-size:12px;letter-spacing:0.6px">14000147D: using guessed type __int64 Its_about_part3();
140003000: using guessed type _BYTE encrypted_array[16];
---------------------------------------------------------------------------------------------
Python 3.12.3 (main, Aug 14 2025, 17:47:21) [GCC 13.3.0]
IDAPython 64-bit v9.0.0 final (serial 0) (c) The IDAPython Team &lt;idapython@googlegroups.com&gt;
---------------------------------------------------------------------------------------------
140001700: using guessed type __int64 __fastcall _main(_QWORD, _QWORD, _QWORD);
140001700: using guessed type __int64 __fastcall _main(_QWORD, _QWORD, _QWORD);</div>
<div class="a" style="left:1905px;top:877px;width:14px;height:114px;background:#e3e3e3;border-left:1px solid #b8b8b8"></div>
<div class="a" style="left:1906px;top:877px;width:13px;height:14px;background:linear-gradient(90deg,#fbfbfb,#f0f0f0);border-bottom:1px solid #c8c8c8"></div>
<svg class="a" style="left:1906px;top:877px" width="13" height="14"><path d="M2.5 8.5h8l-4-4z" fill="#4a4a4a"/></svg>
<div class="a" style="left:1906px;top:950px;width:13px;height:28px;background:linear-gradient(90deg,#fdfdfd,#efefef);border-top:1px solid #c2c2c2"></div>
<div class="a" style="left:1906px;top:977px;width:13px;height:14px;background:linear-gradient(90deg,#fbfbfb,#f0f0f0);border-top:1px solid #c8c8c8"></div>
<svg class="a" style="left:1906px;top:977px" width="13" height="14"><path d="M2.5 5.5h8l-4 4z" fill="#4a4a4a"/></svg>
<!-- python button + input -->
<div class="a" style="left:1px;top:994px;width:65px;height:22px;background:linear-gradient(#fcfcfc,#f1f1f1);border:1px solid #bdbdbd;border-radius:3px"></div>
<div class="t" style="left:13px;top:997px;line-height:18px">Python</div>
<div class="a" style="left:70px;top:994px;width:1848px;height:22px;background:#fff;border:1px solid #bdbdbd;border-radius:3px"></div>

<div class="t mono" style="left:2px;top:1025px;color:#555;font-size:12px;letter-spacing:0.6px">AU:  idle</div>
<div class="t mono" style="left:94px;top:1025px;color:#555;font-size:12px;letter-spacing:0.6px">Down</div>
<div class="t mono" style="left:170px;top:1025px;color:#555;font-size:12px;letter-spacing:0.6px">Disk: 870GB</div>

<div class="code" style="top:177px;left:483.0px"><span class="ad">.rdata:0000000140004000 </span><span class="bl">; Flags 40000040: Data Readable</span></div>
<div class="code" style="top:191px;left:483.0px"><span class="ad">.rdata:0000000140004000 </span><span class="bl">; Alignment     : default</span></div>
<div class="code" style="top:205px;left:483.0px"><span class="ad">.rdata:0000000140004000 </span><span class="cm">; ===========================================================================</span></div>
<div class="code" style="top:219px;left:483.0px"><span class="ad">.rdata:0000000140004000 </span></div>
<div class="code" style="top:233px;left:483.0px"><span class="ad">.rdata:0000000140004000 </span><span class="cm">; Segment type: Pure data</span></div>
<div class="code" style="top:247px;left:483.0px"><span class="ad">.rdata:0000000140004000 </span><span class="cm">; Segment permissions: Read</span></div>
<div class="code" style="top:261px;left:483.0px"><span class="ad">.rdata:0000000140004000 </span><span class="bl">_rdata          segment para public &#x27;DATA&#x27; use64</span></div>
<div class="code" style="top:275px;left:483.0px"><span class="ad">.rdata:0000000140004000 </span><span class="bl">                assume cs:_rdata</span></div>
<div class="code" style="top:289px;left:483.0px"><span class="ad">.rdata:0000000140004000 </span><span class="cm">                ;org 140004000h</span></div>
<div class="code" style="top:303px;left:483.0px"><span class="ad">.rdata:0000000140004000 </span><span class="bl">                public flag_part_4</span></div>
<div class="code" style="top:317px;left:483.0px"><span class="ad">.rdata:0000000140004000 </span><span class="bl">flag_part_4     </span><span class="nv">db </span><span class="nv">&#x27;</span><span class="st">1e_Gam3</span><span class="nv">&#x27;</span><span class="nv">,</span><span class="st">0</span></div>
<div class="code" style="top:331px;left:483.0px"><span class="ad">.rdata:0000000140004008 </span><span class="cm">; const char Buffer[]</span></div>
<div class="code" style="top:345px;left:483.0px"><span class="ad">.rdata:0000000140004008 </span><span class="nv">Buffer          db </span><span class="nv">&#x27;</span><span class="st">Congratulations! You found the second part of the flag--The funct</span><span class="nv">&#x27;</span></div>
<div class="code" style="top:359px;left:483.0px"><span class="ad">.rdata:0000000140004008 </span><span class="xr">                                        ; DATA XREF: Like_7his_Jig+8<span style="position:relative;color:transparent">↑<svg style="position:absolute;left:0;top:0" width="8" height="14"><path d="M4 3.1L1.8 5.9H6.2Z" fill="#8080ff"/><rect x="3.5" y="5.5" width="1" height="4.3" fill="#8080ff"/></svg></span>o</span></div>
<div class="code" style="top:373px;left:483.0px"><span class="ad">.rdata:0000000140004049 </span><span class="nv">                db </span><span class="nv">&#x27;</span><span class="st">ion name.</span><span class="nv">&#x27;</span><span class="nv">,</span><span class="st">0</span></div>
<div class="code" style="top:387px;left:483.0px"><span class="ad">.rdata:0000000140004053 </span><span class="nv">                align </span><span class="nu">8</span></div>
<div class="code" style="top:401px;left:483.0px"><span class="ad">.rdata:0000000140004058 </span><span class="cm">; const char Format[]</span></div>
<div class="code" style="top:415px;left:483.0px"><span class="ad">.rdata:0000000140004058 </span><span class="nv">Format          db </span><span class="nv">&#x27;</span><span class="st">Observing function names is an important step in reverse engineer</span><span class="nv">&#x27;</span></div>
<div class="code" style="top:429px;left:483.0px"><span class="ad">.rdata:0000000140004058 </span><span class="xr">                                        ; DATA XREF: Like_7his_Jig+17<span style="position:relative;color:transparent">↑<svg style="position:absolute;left:0;top:0" width="8" height="14"><path d="M4 3.1L1.8 5.9H6.2Z" fill="#8080ff"/><rect x="3.5" y="5.5" width="1" height="4.3" fill="#8080ff"/></svg></span>o</span></div>
<div class="code" style="top:443px;left:483.0px"><span class="ad">.rdata:0000000140004099 </span><span class="nv">                db </span><span class="nv">&#x27;</span><span class="st">ing.</span><span class="nv">&#x27;</span><span class="nv">,</span><span class="st">0</span></div>
<div class="code" style="top:457px;left:483.0px"><span class="ad">.rdata:000000014000409E </span><span class="nv">                align </span><span class="nu">20h</span></div>
<div class="code" style="top:471px;left:483.0px"><span class="adc">.rdata:00000001400040A0 </span><span class="cm">; const char </span><span class="cm yh">aYouCanUseShift</span><span class="cm">[]</span></div>
<div class="code" style="top:485px;left:483.0px"><span class="adc">.rdata:00000001400040A0 </span><span class="nv yh2">aYouCanUseShift</span><span class="nv"> db </span><span class="nv">&#x27;</span><span class="st">You can use shift+e to extract the data.</span><span class="nv">&#x27;</span><span class="nv">,</span><span class="st">0</span></div>
<div class="code" style="top:499px;left:483.0px"><span class="adc">.rdata:00000001400040A0 </span><span class="xr">                                        ; DATA XREF: Its_about_part3+8<span style="position:relative;color:transparent">↑<svg style="position:absolute;left:0;top:0" width="8" height="14"><path d="M4 3.1L1.8 5.9H6.2Z" fill="#8080ff"/><rect x="3.5" y="5.5" width="1" height="4.3" fill="#8080ff"/></svg></span>o</span></div>
<div class="code" style="top:513px;left:483.0px"><span class="ad">.rdata:00000001400040C9 </span><span class="nv">aDo             db </span><span class="nv">&#x27;</span><span class="st">Do_</span><span class="nv">&#x27;</span><span class="nv">,</span><span class="st">0</span><span class="xr">              ; DATA XREF: Puzzle_Challenge+8<span style="position:relative;color:transparent">↑<svg style="position:absolute;left:0;top:0" width="8" height="14"><path d="M4 3.1L1.8 5.9H6.2Z" fill="#8080ff"/><rect x="3.5" y="5.5" width="1" height="4.3" fill="#8080ff"/></svg></span>o</span></div>
<div class="code" style="top:527px;left:483.0px"><span class="ad">.rdata:00000001400040CD </span><span class="nv">aY0u            db </span><span class="nv">&#x27;</span><span class="st">Y0u_</span><span class="nv">&#x27;</span><span class="nv">,</span><span class="st">0</span><span class="xr">             ; DATA XREF: Puzzle_Challenge+13<span style="position:relative;color:transparent">↑<svg style="position:absolute;left:0;top:0" width="8" height="14"><path d="M4 3.1L1.8 5.9H6.2Z" fill="#8080ff"/><rect x="3.5" y="5.5" width="1" height="4.3" fill="#8080ff"/></svg></span>o</span></div>
<div class="code" style="top:541px;left:483.0px"><span class="ad">.rdata:00000001400040D2 </span><span class="nv">                align </span><span class="nu">8</span></div>
<div class="code" style="top:555px;left:483.0px"><span class="ad">.rdata:00000001400040D8 </span><span class="cm">; const char aWelcomeToTheJi[]</span></div>
<div class="code" style="top:569px;left:483.0px"><span class="ad">.rdata:00000001400040D8 </span><span class="nv">aWelcomeToTheJi db </span><span class="nv">&#x27;</span><span class="st">Welcome to the Jigsaw Puzzle Game!</span><span class="nv">&#x27;</span><span class="nv">,</span><span class="st">0</span></div>
<div class="code" style="top:583px;left:483.0px"><span class="ad">.rdata:00000001400040D8 </span><span class="xr">                                        ; DATA XREF: Puzzle_Challenge+3E<span style="position:relative;color:transparent">↑<svg style="position:absolute;left:0;top:0" width="8" height="14"><path d="M4 3.1L1.8 5.9H6.2Z" fill="#8080ff"/><rect x="3.5" y="5.5" width="1" height="4.3" fill="#8080ff"/></svg></span>o</span></div>
<div class="code" style="top:597px;left:483.0px"><span class="ad">.rdata:00000001400040FB </span><span class="nv">                align </span><span class="nu">20h</span></div>
<div class="code" style="top:611px;left:483.0px"><span class="ad">.rdata:0000000140004100 </span><span class="cm">; const char aHuhWhyDoSomeFu[]</span></div>
<div class="code" style="top:625px;left:483.0px"><span class="ad">.rdata:0000000140004100 </span><span class="nv">aHuhWhyDoSomeFu db </span><span class="nv">&#x27;</span><span class="st">Huh? Why do some functions have strange names?Check it out.</span><span class="nv">&#x27;</span><span class="nv">,</span><span class="st">0</span></div>
<div class="code" style="top:639px;left:483.0px"><span class="ad">.rdata:0000000140004100 </span><span class="xr">                                        ; DATA XREF: main+15<span style="position:relative;color:transparent">↑<svg style="position:absolute;left:0;top:0" width="8" height="14"><path d="M4 3.1L1.8 5.9H6.2Z" fill="#8080ff"/><rect x="3.5" y="5.5" width="1" height="4.3" fill="#8080ff"/></svg></span>o</span></div>
<div class="code" style="top:653px;left:483.0px"><span class="ad">.rdata:000000014000413C </span><span class="nv">                align </span><span class="nu">20h</span></div>
<div class="code" style="top:667px;left:483.0px"><span class="ad">.rdata:0000000140004140 </span><span class="cm">; const char aSometimesShift[]</span></div>
<div class="code" style="top:681px;left:483.0px"><span class="ad">.rdata:0000000140004140 </span><span class="nv">aSometimesShift db </span><span class="nv">&#x27;</span><span class="st">Sometimes shift+f12 and x will help you find useful information.</span><span class="nv">&#x27;</span><span class="nv">,</span><span class="st">0</span></div>
<div class="code" style="top:695px;left:483.0px"><span class="ad">.rdata:0000000140004140 </span><span class="xr">                                        ; DATA XREF: main+24<span style="position:relative;color:transparent">↑<svg style="position:absolute;left:0;top:0" width="8" height="14"><path d="M4 3.1L1.8 5.9H6.2Z" fill="#8080ff"/><rect x="3.5" y="5.5" width="1" height="4.3" fill="#8080ff"/></svg></span>o</span></div>
<div class="code" style="top:709px;left:483.0px"><span class="ad">.rdata:0000000140004181 </span><span class="nv">                align </span><span class="nu">8</span></div>
<div class="code" style="top:723px;left:483.0px"><span class="ad">.rdata:0000000140004188 </span><span class="cm">; const char aTryToPutThemTo[]</span></div>
<div class="code" style="top:737px;left:483.0px"><span class="ad">.rdata:0000000140004188 </span><span class="nv">aTryToPutThemTo db </span><span class="nv">&#x27;</span><span class="st">Try to put them together. The flag is in the format flag{part1par</span><span class="nv">&#x27;</span></div>
<div class="code" style="top:751px;left:483.0px"><span class="ad">.rdata:0000000140004188 </span><span class="xr">                                        ; DATA XREF: main+D6<span style="position:relative;color:transparent">↑<svg style="position:absolute;left:0;top:0" width="8" height="14"><path d="M4 3.1L1.8 5.9H6.2Z" fill="#8080ff"/><rect x="3.5" y="5.5" width="1" height="4.3" fill="#8080ff"/></svg></span>o</span></div>
<div class="code" style="top:765px;left:483.0px"><span class="ad">.rdata:00000001400041C9 </span><span class="nv">                db </span><span class="nv">&#x27;</span><span class="st">t2part3part4}</span><span class="nv">&#x27;</span><span class="nv">,</span><span class="st">0</span></div>
<div class="code" style="top:779px;left:483.0px"><span class="ad">.rdata:00000001400041D7 </span><span class="nv">                align </span><span class="nu">20h</span></div>
<div class="code" style="top:793px;left:483.0px"><span class="ad">.rdata:00000001400041E0 </span><span class="bl">                public __dyn_tls_init_callback</span></div>
<div class="code" style="top:807px;left:483.0px"><span class="ad">.rdata:00000001400041E0 </span><span class="bl">__dyn_tls_init_callback </span><span class="nv">dq offset __dyn_tls_init</span></div>
<div class="t mono" style="left:470.0px;top:825px;color:#3c3c3c;font-size:12px;letter-spacing:0.55px">000024A0 00000001400040A0: .rdata:aYouCanUseShift (Synchronized with Hex View-1)</div>
</body></html>
